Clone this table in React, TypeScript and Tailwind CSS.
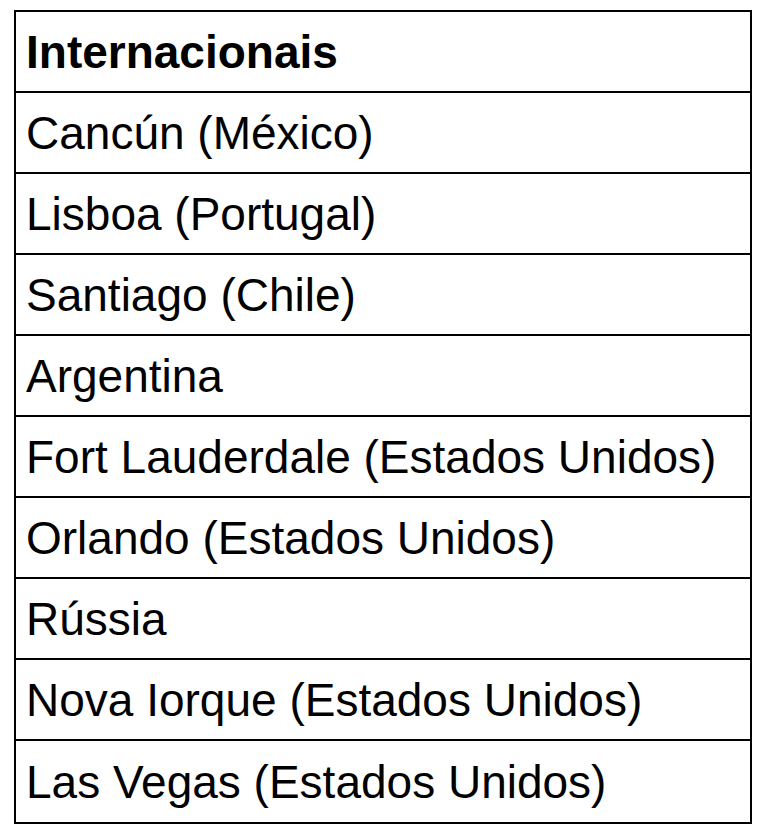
const rows = [
  "Cancún (México)",
  "Lisboa (Portugal)",
  "Santiago (Chile)",
  "Argentina",
  "Fort Lauderdale (Estados Unidos)",
  "Orlando (Estados Unidos)",
  "Rússia",
  "Nova Iorque (Estados Unidos)",
  "Las Vegas (Estados Unidos)",
];

export default function App() {
  return (
    <div className="min-h-[835px] w-[768px] bg-white pl-[14px] pt-[10px] font-['Liberation_Sans',Arial,sans-serif] text-black">
      <div className="flex w-[738px] flex-col border-2 border-black">
        <div className="flex h-[81px] items-center border-b-2 border-black pl-[10px] text-[46px] leading-none font-bold">
          Internacionais
        </div>
        {rows.map((r, i) => (
          <div
            key={r}
            className={`flex h-[81px] items-center pl-[10px] text-[46px] leading-none ${
              i < rows.length - 1 ? "border-b-2 border-black" : ""
            }`}
          >
            {r}
          </div>
        ))}
      </div>
    </div>
  );
}
